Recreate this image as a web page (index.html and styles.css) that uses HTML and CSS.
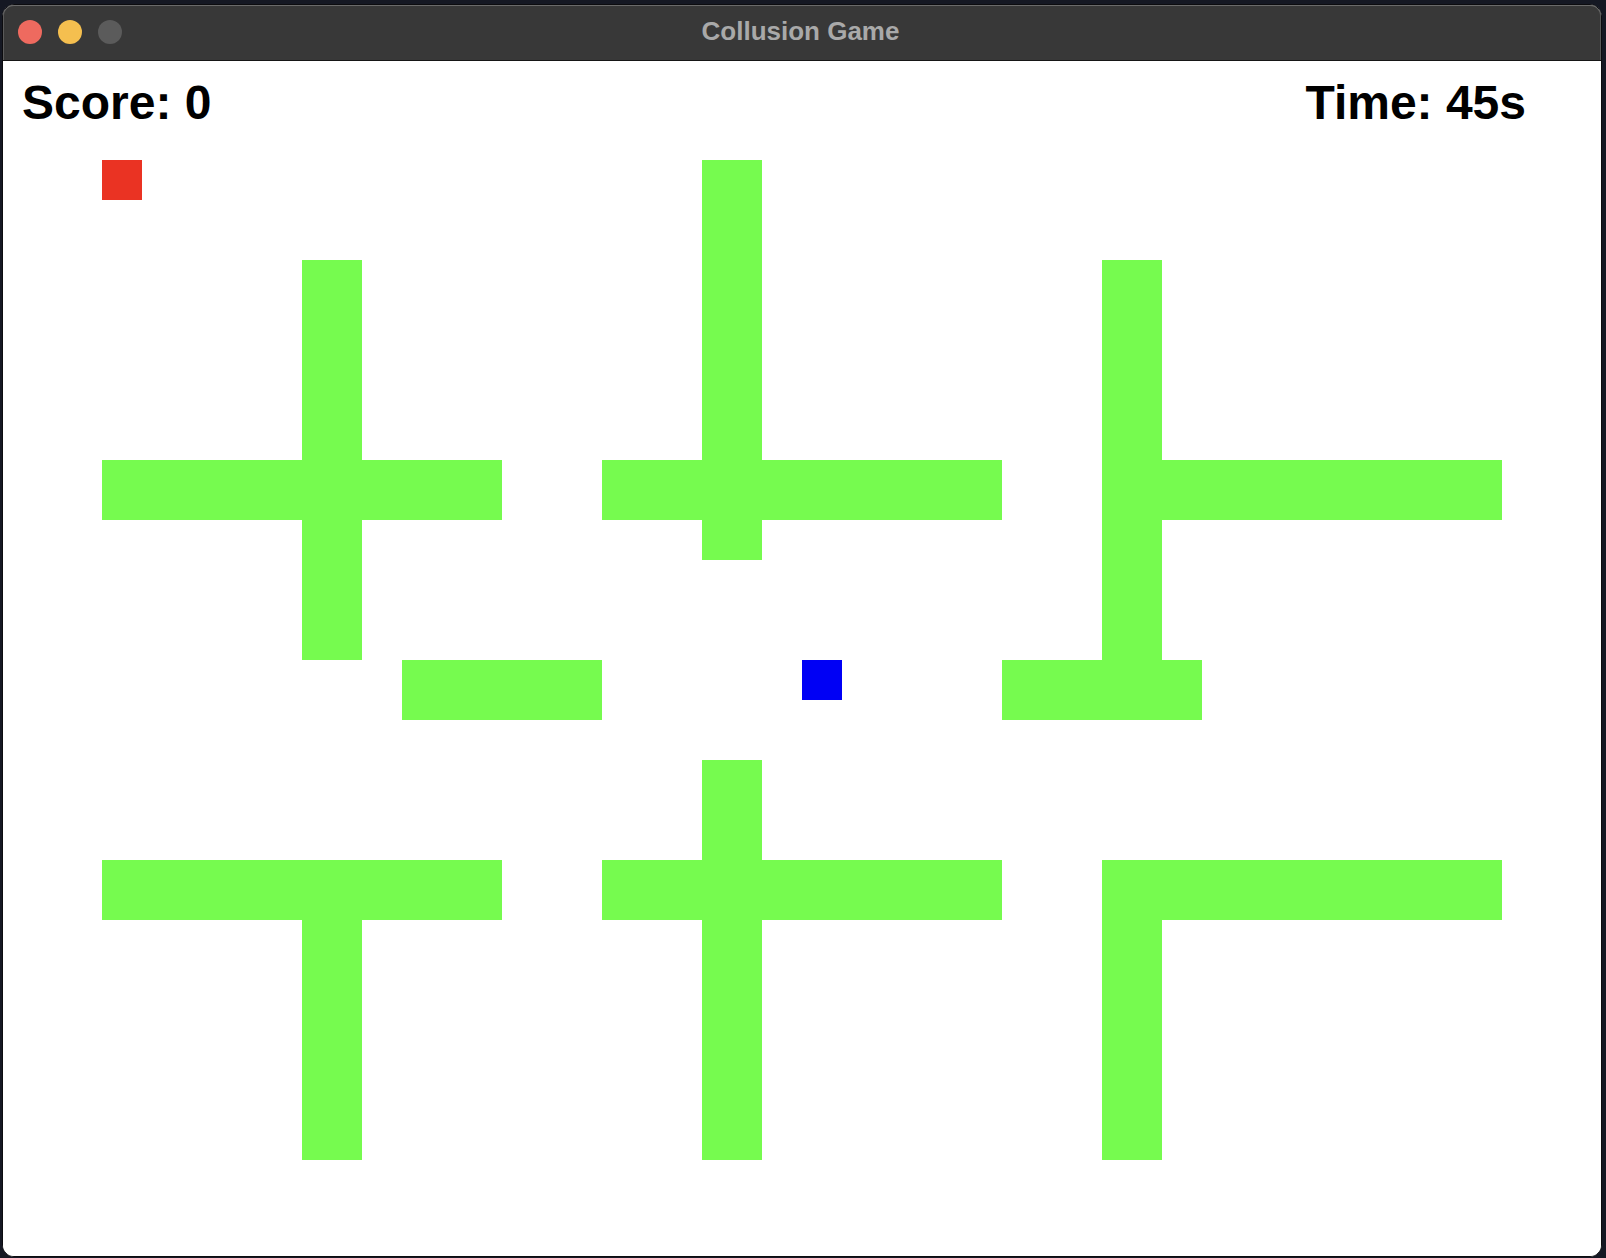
FILE: index.html
```html
<!DOCTYPE html>
<html lang="en">
<head>
<meta charset="utf-8">
<title>Collusion Game</title>
<link rel="stylesheet" href="styles.css">
</head>
<body>
<div class="window">
  <div class="titlebar">
    <div class="lights">
      <span class="light close"></span>
      <span class="light min"></span>
      <span class="light max"></span>
    </div>
    <div class="title">Collusion Game</div>
  </div>
  <div class="game">
    <svg class="canvas" width="1598" height="1196" viewBox="1 1 1598 1196" xmlns="http://www.w3.org/2000/svg">
      <g fill="#76fb4f">
        <rect x="100" y="400" width="400" height="60"/>
        <rect x="300" y="200" width="60" height="400"/>
        <rect x="600" y="400" width="400" height="60"/>
        <rect x="700" y="100" width="60" height="400"/>
        <rect x="1100" y="200" width="60" height="400"/>
        <rect x="1100" y="400" width="400" height="60"/>
        <rect x="400" y="600" width="200" height="60"/>
        <rect x="1000" y="600" width="200" height="60"/>
        <rect x="100" y="800" width="400" height="60"/>
        <rect x="300" y="800" width="60" height="300"/>
        <rect x="600" y="800" width="400" height="60"/>
        <rect x="700" y="700" width="60" height="400"/>
        <rect x="1100" y="800" width="400" height="60"/>
        <rect x="1100" y="800" width="60" height="300"/>
      </g>
      <rect x="100" y="100" width="40" height="40" fill="#ea3323"/>
      <rect x="800" y="600" width="40" height="40" fill="#0000f5"/>
    </svg>
    <div class="hud">
      <span class="score">Score: 0</span>
      <span class="time">Time: 45s</span>
    </div>
  </div>
</div>
</body>
</html>
```

FILE: styles.css
```css
html, body {
  margin: 0;
  padding: 0;
}
body {
  width: 1606px;
  height: 1258px;
  overflow: hidden;
  background: #151823;
  font-family: "Liberation Sans", Arial, sans-serif;
}
.window {
  margin: 4px 0 0 2px;
  width: 1598px;
  height: 1251px;
  border: 1px solid #0c0c0f;
  border-radius: 12px;
  overflow: hidden;
  background: #ffffff;
  display: flex;
  flex-direction: column;
}
.titlebar {
  position: relative;
  flex: none;
  height: 55px;
  background: #383838;
  border-bottom: 1px solid #161616;
  box-shadow: inset 0 1px 0 #6a6a6a, inset 1px 0 0 #5a5a5a, inset -1px 0 0 #5a5a5a;
  border-radius: 11px 11px 0 0;
  display: flex;
  align-items: center;
  justify-content: center;
}
.lights {
  position: absolute;
  left: 15px;
  top: 15px;
  display: flex;
  gap: 16px;
}
.light {
  width: 24px;
  height: 24px;
  border-radius: 50%;
  display: block;
}
.close { background: #ee6a5f; }
.min { background: #f5bf4f; }
.max { background: #5b5b5b; }
.title {
  color: #a9a9a9;
  font-weight: bold;
  font-size: 26px;
  line-height: 30px;
  margin-top: -3px;
  margin-left: -3px;
}
.game {
  position: relative;
  flex: 1;
  background: #ffffff;
}
.canvas {
  display: block;
}
.hud {
  position: absolute;
  top: 0;
  left: 0;
  right: 0;
  padding: 18px 75px 0 19px;
  display: flex;
  justify-content: space-between;
  font-weight: bold;
  font-size: 48px;
  line-height: 48px;
  color: #000000;
}
```
